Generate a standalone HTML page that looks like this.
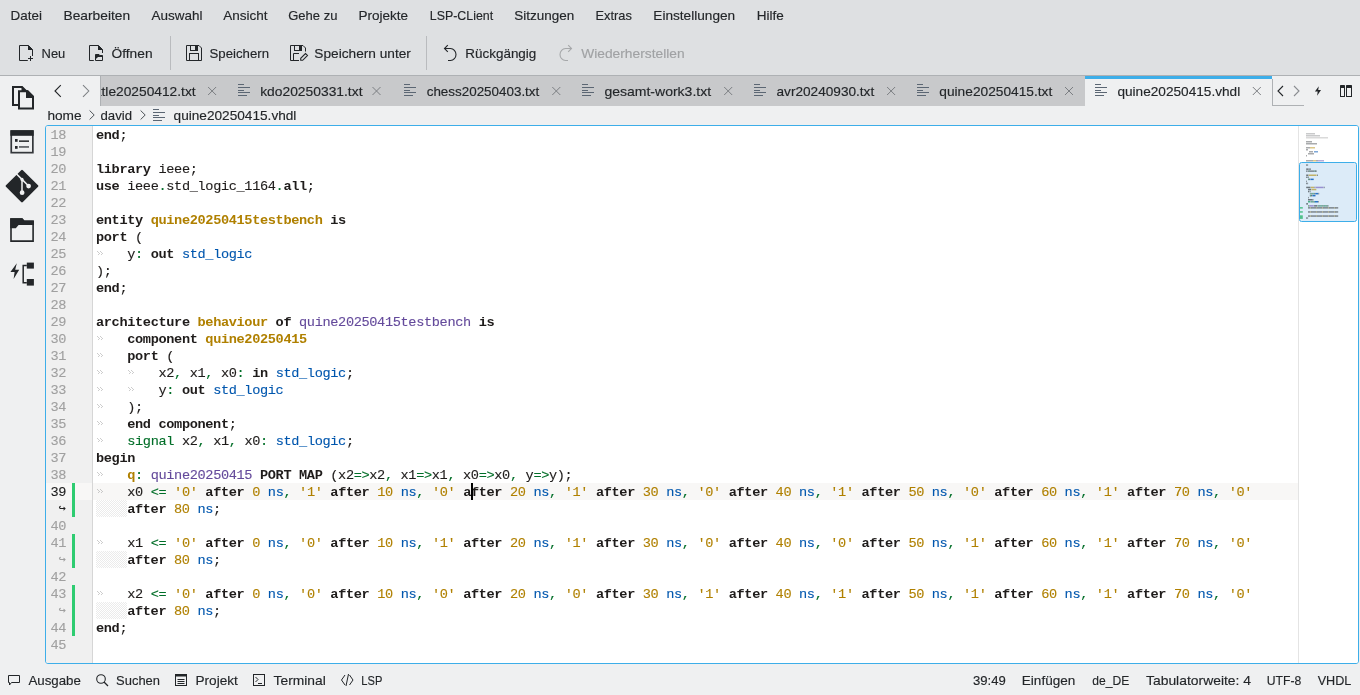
<!DOCTYPE html>
<html><head><meta charset="utf-8"><style>
*{margin:0;padding:0;box-sizing:border-box}
html,body{width:1360px;height:695px;overflow:hidden;background:#eff0f1}
body{position:relative;font-family:"Liberation Sans",sans-serif}
svg.ui{position:absolute;left:0;top:0;z-index:5;will-change:transform}
svg.ui text{font-family:"Liberation Sans",sans-serif;stroke:currentColor;stroke-width:0.15px}
#ed{position:absolute;left:45px;top:125px;width:1314px;height:539px;border:1px solid #3daee9;border-radius:3px;background:#fff;overflow:hidden}
#gut{position:absolute;left:0;top:0;width:46px;height:537px;background:#f0f0f0;will-change:transform}
#sep{position:absolute;left:46px;top:0;width:1px;height:537px;background:#d6d6d6}
#code{position:absolute;left:47px;top:0;width:1205px;height:537px;will-change:transform}
.row{position:absolute;left:0;width:1205px;height:17px;padding-left:3px;white-space:pre;font-family:"Liberation Mono",monospace;font-size:13.6px;letter-spacing:-0.35px;line-height:19px;color:#1f1c1b}
.row.cur{background:#f8f7f6}
.row{-webkit-text-stroke:0.12px currentColor}.row b{font-weight:bold;-webkit-text-stroke:0}
.row i{font-style:normal}
.t{color:#0057ae}.n{color:#b08000}.f{color:#644a9b}.o{color:#006e28}
.tm{color:#c4c4c4}
.hatch{display:inline-block;width:31.2px;height:17px;vertical-align:top;background:repeating-conic-gradient(#ebebeb 0 25%,#fff 0 50%) 0 0/2px 2px}
.gn{position:absolute;left:0;width:20px;height:17px;text-align:right;font-family:"Liberation Mono",monospace;font-size:13.6px;letter-spacing:-0.35px;line-height:19px;color:#a0a0a0;-webkit-text-stroke:0.12px currentColor}
.gn.wrap{font-size:12px;letter-spacing:0}.gn.curn{color:#1e1e1e}
.gcur{position:absolute;left:0;width:46px;height:17px;background:#f8f7f6}
.gbar{position:absolute;left:26px;width:3px;background:#2ecc71}
#mm{position:absolute;left:1252px;top:0;width:60px;height:537px;border-left:1px solid #e4e4e4;background:#fff}
</style></head>
<body>
<div id="ed">
<div id="gut"><div class="gcur" style="top:357px"></div><div class="gbar" style="top:357px;height:34px"></div><div class="gbar" style="top:408px;height:34px"></div><div class="gbar" style="top:459px;height:51px"></div><div class="gn" style="top:0px">18</div><div class="gn" style="top:17px">19</div><div class="gn" style="top:34px">20</div><div class="gn" style="top:51px">21</div><div class="gn" style="top:68px">22</div><div class="gn" style="top:85px">23</div><div class="gn" style="top:102px">24</div><div class="gn" style="top:119px">25</div><div class="gn" style="top:136px">26</div><div class="gn" style="top:153px">27</div><div class="gn" style="top:170px">28</div><div class="gn" style="top:187px">29</div><div class="gn" style="top:204px">30</div><div class="gn" style="top:221px">31</div><div class="gn" style="top:238px">32</div><div class="gn" style="top:255px">33</div><div class="gn" style="top:272px">34</div><div class="gn" style="top:289px">35</div><div class="gn" style="top:306px">36</div><div class="gn" style="top:323px">37</div><div class="gn" style="top:340px">38</div><div class="gn curn" style="top:357px">39</div><div class="gn wrap curn" style="top:374px">↪</div><div class="gn" style="top:391px">40</div><div class="gn" style="top:408px">41</div><div class="gn wrap" style="top:425px">↪</div><div class="gn" style="top:442px">42</div><div class="gn" style="top:459px">43</div><div class="gn wrap" style="top:476px">↪</div><div class="gn" style="top:493px">44</div><div class="gn" style="top:510px">45</div></div>
<div id="sep"></div>
<div id="code"><div class="row" style="top:0px"><b>end</b>;</div><div class="row" style="top:17px"></div><div class="row" style="top:34px"><b>library</b> ieee;</div><div class="row" style="top:51px"><b>use</b> ieee<i class="o">.</i>std_logic_1164<i class="o">.</i><b>all</b>;</div><div class="row" style="top:68px"></div><div class="row" style="top:85px"><b>entity</b> <b class="n">quine20250415testbench</b> <b>is</b></div><div class="row" style="top:102px"><b>port</b> (</div><div class="row" style="top:119px"><i class="tm"><svg width="7.81" height="17" style="vertical-align:top"><path d="M1.5,6.5 L3.5,8.5 L1.5,10.5 M4.5,6.5 L6.5,8.5 L4.5,10.5" fill="none" stroke="#999" stroke-width="1" stroke-dasharray="1.414 1.414"/></svg></i>   y<i class="o">:</i> <b>out</b> <i class="t">std_logic</i></div><div class="row" style="top:136px">);</div><div class="row" style="top:153px"><b>end</b>;</div><div class="row" style="top:170px"></div><div class="row" style="top:187px"><b>architecture</b> <b class="n">behaviour</b> <b>of</b> <i class="f">quine20250415testbench</i> <b>is</b></div><div class="row" style="top:204px"><i class="tm"><svg width="7.81" height="17" style="vertical-align:top"><path d="M1.5,6.5 L3.5,8.5 L1.5,10.5 M4.5,6.5 L6.5,8.5 L4.5,10.5" fill="none" stroke="#999" stroke-width="1" stroke-dasharray="1.414 1.414"/></svg></i>   <b>component</b> <b class="n">quine20250415</b></div><div class="row" style="top:221px"><i class="tm"><svg width="7.81" height="17" style="vertical-align:top"><path d="M1.5,6.5 L3.5,8.5 L1.5,10.5 M4.5,6.5 L6.5,8.5 L4.5,10.5" fill="none" stroke="#999" stroke-width="1" stroke-dasharray="1.414 1.414"/></svg></i>   <b>port</b> (</div><div class="row" style="top:238px"><i class="tm"><svg width="7.81" height="17" style="vertical-align:top"><path d="M1.5,6.5 L3.5,8.5 L1.5,10.5 M4.5,6.5 L6.5,8.5 L4.5,10.5" fill="none" stroke="#999" stroke-width="1" stroke-dasharray="1.414 1.414"/></svg></i>   <i class="tm"><svg width="7.81" height="17" style="vertical-align:top"><path d="M1.5,6.5 L3.5,8.5 L1.5,10.5 M4.5,6.5 L6.5,8.5 L4.5,10.5" fill="none" stroke="#999" stroke-width="1" stroke-dasharray="1.414 1.414"/></svg></i>   x2<i class="o">,</i> x1<i class="o">,</i> x0<i class="o">:</i> <b>in</b> <i class="t">std_logic</i>;</div><div class="row" style="top:255px"><i class="tm"><svg width="7.81" height="17" style="vertical-align:top"><path d="M1.5,6.5 L3.5,8.5 L1.5,10.5 M4.5,6.5 L6.5,8.5 L4.5,10.5" fill="none" stroke="#999" stroke-width="1" stroke-dasharray="1.414 1.414"/></svg></i>   <i class="tm"><svg width="7.81" height="17" style="vertical-align:top"><path d="M1.5,6.5 L3.5,8.5 L1.5,10.5 M4.5,6.5 L6.5,8.5 L4.5,10.5" fill="none" stroke="#999" stroke-width="1" stroke-dasharray="1.414 1.414"/></svg></i>   y<i class="o">:</i> <b>out</b> <i class="t">std_logic</i></div><div class="row" style="top:272px"><i class="tm"><svg width="7.81" height="17" style="vertical-align:top"><path d="M1.5,6.5 L3.5,8.5 L1.5,10.5 M4.5,6.5 L6.5,8.5 L4.5,10.5" fill="none" stroke="#999" stroke-width="1" stroke-dasharray="1.414 1.414"/></svg></i>   );</div><div class="row" style="top:289px"><i class="tm"><svg width="7.81" height="17" style="vertical-align:top"><path d="M1.5,6.5 L3.5,8.5 L1.5,10.5 M4.5,6.5 L6.5,8.5 L4.5,10.5" fill="none" stroke="#999" stroke-width="1" stroke-dasharray="1.414 1.414"/></svg></i>   <b>end component</b>;</div><div class="row" style="top:306px"><i class="tm"><svg width="7.81" height="17" style="vertical-align:top"><path d="M1.5,6.5 L3.5,8.5 L1.5,10.5 M4.5,6.5 L6.5,8.5 L4.5,10.5" fill="none" stroke="#999" stroke-width="1" stroke-dasharray="1.414 1.414"/></svg></i>   <i class="o">signal</i> x2<i class="o">,</i> x1<i class="o">,</i> x0<i class="o">:</i> <i class="t">std_logic</i>;</div><div class="row" style="top:323px"><b>begin</b></div><div class="row" style="top:340px"><i class="tm"><svg width="7.81" height="17" style="vertical-align:top"><path d="M1.5,6.5 L3.5,8.5 L1.5,10.5 M4.5,6.5 L6.5,8.5 L4.5,10.5" fill="none" stroke="#999" stroke-width="1" stroke-dasharray="1.414 1.414"/></svg></i>   <b class="n">q</b><i class="o">:</i> <i class="f">quine20250415</i> <b>PORT MAP</b> (x2<i class="o">=&gt;</i>x2<i class="o">,</i> x1<i class="o">=&gt;</i>x1<i class="o">,</i> x0<i class="o">=&gt;</i>x0<i class="o">,</i> y<i class="o">=&gt;</i>y);</div><div class="row cur" style="top:357px"><i class="tm"><svg width="7.81" height="17" style="vertical-align:top"><path d="M1.5,6.5 L3.5,8.5 L1.5,10.5 M4.5,6.5 L6.5,8.5 L4.5,10.5" fill="none" stroke="#999" stroke-width="1" stroke-dasharray="1.414 1.414"/></svg></i>   x0 <i class="o">&lt;=</i> <i class="n">&#x27;0&#x27;</i> <b>after</b> <i class="n">0</i> <i class="t">ns</i><i class="o">,</i> <i class="n">&#x27;1&#x27;</i> <b>after</b> <i class="n">10</i> <i class="t">ns</i><i class="o">,</i> <i class="n">&#x27;0&#x27;</i> <b>after</b> <i class="n">20</i> <i class="t">ns</i><i class="o">,</i> <i class="n">&#x27;1&#x27;</i> <b>after</b> <i class="n">30</i> <i class="t">ns</i><i class="o">,</i> <i class="n">&#x27;0&#x27;</i> <b>after</b> <i class="n">40</i> <i class="t">ns</i><i class="o">,</i> <i class="n">&#x27;1&#x27;</i> <b>after</b> <i class="n">50</i> <i class="t">ns</i><i class="o">,</i> <i class="n">&#x27;0&#x27;</i> <b>after</b> <i class="n">60</i> <i class="t">ns</i><i class="o">,</i> <i class="n">&#x27;1&#x27;</i> <b>after</b> <i class="n">70</i> <i class="t">ns</i><i class="o">,</i> <i class="n">&#x27;0&#x27;</i></div><div class="row" style="top:374px"><i class="hatch"></i><b>after</b> <i class="n">80</i> <i class="t">ns</i>;</div><div class="row" style="top:391px"></div><div class="row" style="top:408px"><i class="tm"><svg width="7.81" height="17" style="vertical-align:top"><path d="M1.5,6.5 L3.5,8.5 L1.5,10.5 M4.5,6.5 L6.5,8.5 L4.5,10.5" fill="none" stroke="#999" stroke-width="1" stroke-dasharray="1.414 1.414"/></svg></i>   x1 <i class="o">&lt;=</i> <i class="n">&#x27;0&#x27;</i> <b>after</b> <i class="n">0</i> <i class="t">ns</i><i class="o">,</i> <i class="n">&#x27;0&#x27;</i> <b>after</b> <i class="n">10</i> <i class="t">ns</i><i class="o">,</i> <i class="n">&#x27;1&#x27;</i> <b>after</b> <i class="n">20</i> <i class="t">ns</i><i class="o">,</i> <i class="n">&#x27;1&#x27;</i> <b>after</b> <i class="n">30</i> <i class="t">ns</i><i class="o">,</i> <i class="n">&#x27;0&#x27;</i> <b>after</b> <i class="n">40</i> <i class="t">ns</i><i class="o">,</i> <i class="n">&#x27;0&#x27;</i> <b>after</b> <i class="n">50</i> <i class="t">ns</i><i class="o">,</i> <i class="n">&#x27;1&#x27;</i> <b>after</b> <i class="n">60</i> <i class="t">ns</i><i class="o">,</i> <i class="n">&#x27;1&#x27;</i> <b>after</b> <i class="n">70</i> <i class="t">ns</i><i class="o">,</i> <i class="n">&#x27;0&#x27;</i></div><div class="row" style="top:425px"><i class="hatch"></i><b>after</b> <i class="n">80</i> <i class="t">ns</i>;</div><div class="row" style="top:442px"></div><div class="row" style="top:459px"><i class="tm"><svg width="7.81" height="17" style="vertical-align:top"><path d="M1.5,6.5 L3.5,8.5 L1.5,10.5 M4.5,6.5 L6.5,8.5 L4.5,10.5" fill="none" stroke="#999" stroke-width="1" stroke-dasharray="1.414 1.414"/></svg></i>   x2 <i class="o">&lt;=</i> <i class="n">&#x27;0&#x27;</i> <b>after</b> <i class="n">0</i> <i class="t">ns</i><i class="o">,</i> <i class="n">&#x27;0&#x27;</i> <b>after</b> <i class="n">10</i> <i class="t">ns</i><i class="o">,</i> <i class="n">&#x27;0&#x27;</i> <b>after</b> <i class="n">20</i> <i class="t">ns</i><i class="o">,</i> <i class="n">&#x27;0&#x27;</i> <b>after</b> <i class="n">30</i> <i class="t">ns</i><i class="o">,</i> <i class="n">&#x27;1&#x27;</i> <b>after</b> <i class="n">40</i> <i class="t">ns</i><i class="o">,</i> <i class="n">&#x27;1&#x27;</i> <b>after</b> <i class="n">50</i> <i class="t">ns</i><i class="o">,</i> <i class="n">&#x27;1&#x27;</i> <b>after</b> <i class="n">60</i> <i class="t">ns</i><i class="o">,</i> <i class="n">&#x27;1&#x27;</i> <b>after</b> <i class="n">70</i> <i class="t">ns</i><i class="o">,</i> <i class="n">&#x27;0&#x27;</i></div><div class="row" style="top:476px"><i class="hatch"></i><b>after</b> <i class="n">80</i> <i class="t">ns</i>;</div><div class="row" style="top:493px"><b>end</b>;</div><div class="row" style="top:510px"></div></div>
<div id="mm"><svg width="59" height="536" style="position:absolute;left:0;top:0"><rect x="0.5" y="36.5" width="57" height="59" rx="2" fill="#dcebf8" stroke="#3daee9" stroke-width="1"/><rect x="7.0" y="7.0" width="9.0" height="1.5" fill="#c9cacb" opacity="1"/><rect x="7.0" y="9.0" width="14.0" height="1.5" fill="#c9cacb" opacity="1"/><rect x="7.0" y="11.0" width="22.0" height="1.5" fill="#dadada" opacity="1"/><rect x="7.0" y="15.0" width="6.0" height="1.5" fill="#a9abad" opacity="1"/><rect x="7.0" y="17.0" width="11.0" height="1.5" fill="#a9abad" opacity="1"/><rect x="7.0" y="21.0" width="4.0" height="1.5" fill="#a9abad" opacity="1"/><rect x="11.0" y="21.0" width="5.0" height="1.5" fill="#dcc78a" opacity="1"/><rect x="7.0" y="23.0" width="2.0" height="1.5" fill="#a9abad" opacity="1"/><rect x="10.0" y="25.0" width="4.0" height="1.5" fill="#a9abad" opacity="1"/><rect x="15.0" y="25.0" width="4.0" height="1.5" fill="#7fa8d8" opacity="1"/><rect x="9.0" y="27.0" width="6.0" height="1.5" fill="#a9abad" opacity="1"/><rect x="7.0" y="29.0" width="1.0" height="1.5" fill="#a9abad" opacity="1"/><rect x="7.0" y="34.0" width="7.0" height="1.5" fill="#a9abad" opacity="1"/><rect x="14.0" y="34.0" width="3.0" height="1.5" fill="#dcc78a" opacity="1"/><rect x="17.0" y="34.0" width="2.0" height="1.5" fill="#a9abad" opacity="1"/><rect x="19.0" y="34.0" width="6.0" height="1.5" fill="#b5abd8" opacity="1"/><rect x="7.2" y="38.3" width="1.1" height="1.5" fill="#6b747c" opacity="1"/><rect x="8.3" y="38.3" width="0.8" height="1.5" fill="#7c858c" opacity="1"/><rect x="7.2" y="42.4" width="2.5" height="1.5" fill="#6b747c" opacity="1"/><rect x="10.1" y="42.4" width="1.8" height="1.5" fill="#7c858c" opacity="1"/><rect x="7.2" y="44.4" width="1.1" height="1.5" fill="#6b747c" opacity="1"/><rect x="8.6" y="44.4" width="1.4" height="1.5" fill="#7c858c" opacity="1"/><rect x="10.1" y="44.4" width="0.8" height="1.5" fill="#4aae88" opacity="1"/><rect x="10.4" y="44.4" width="5.0" height="1.5" fill="#7c858c" opacity="1"/><rect x="15.5" y="44.4" width="0.8" height="1.5" fill="#4aae88" opacity="1"/><rect x="15.8" y="44.4" width="1.1" height="1.5" fill="#6b747c" opacity="1"/><rect x="16.9" y="44.4" width="0.8" height="1.5" fill="#7c858c" opacity="1"/><rect x="7.2" y="48.5" width="2.2" height="1.5" fill="#6b747c" opacity="1"/><rect x="9.7" y="48.5" width="7.9" height="1.5" fill="#c2b268" opacity="1"/><rect x="18.0" y="48.5" width="0.8" height="1.5" fill="#6b747c" opacity="1"/><rect x="7.2" y="50.5" width="1.4" height="1.5" fill="#6b747c" opacity="1"/><rect x="9.0" y="50.5" width="0.8" height="1.5" fill="#7c858c" opacity="1"/><rect x="9.0" y="52.6" width="0.8" height="1.5" fill="#7c858c" opacity="1"/><rect x="9.4" y="52.6" width="0.8" height="1.5" fill="#4aae88" opacity="1"/><rect x="10.1" y="52.6" width="1.1" height="1.5" fill="#6b747c" opacity="1"/><rect x="11.5" y="52.6" width="3.2" height="1.5" fill="#2a72c4" opacity="1"/><rect x="7.2" y="54.6" width="0.8" height="1.5" fill="#7c858c" opacity="1"/><rect x="7.2" y="56.7" width="1.1" height="1.5" fill="#6b747c" opacity="1"/><rect x="8.3" y="56.7" width="0.8" height="1.5" fill="#7c858c" opacity="1"/><rect x="7.2" y="60.7" width="4.3" height="1.5" fill="#6b747c" opacity="1"/><rect x="11.9" y="60.7" width="3.2" height="1.5" fill="#c2b268" opacity="1"/><rect x="15.5" y="60.7" width="0.8" height="1.5" fill="#6b747c" opacity="1"/><rect x="16.6" y="60.7" width="7.9" height="1.5" fill="#9890d0" opacity="1"/><rect x="24.8" y="60.7" width="0.8" height="1.5" fill="#6b747c" opacity="1"/><rect x="9.0" y="62.8" width="3.2" height="1.5" fill="#6b747c" opacity="1"/><rect x="12.6" y="62.8" width="4.7" height="1.5" fill="#c2b268" opacity="1"/><rect x="9.0" y="64.8" width="1.4" height="1.5" fill="#6b747c" opacity="1"/><rect x="10.8" y="64.8" width="0.8" height="1.5" fill="#7c858c" opacity="1"/><rect x="10.8" y="66.9" width="0.8" height="1.5" fill="#7c858c" opacity="1"/><rect x="11.5" y="66.9" width="0.8" height="1.5" fill="#4aae88" opacity="1"/><rect x="12.2" y="66.9" width="0.8" height="1.5" fill="#7c858c" opacity="1"/><rect x="13.0" y="66.9" width="0.8" height="1.5" fill="#4aae88" opacity="1"/><rect x="13.7" y="66.9" width="0.8" height="1.5" fill="#7c858c" opacity="1"/><rect x="14.4" y="66.9" width="0.8" height="1.5" fill="#4aae88" opacity="1"/><rect x="15.1" y="66.9" width="0.8" height="1.5" fill="#6b747c" opacity="1"/><rect x="16.2" y="66.9" width="3.2" height="1.5" fill="#2a72c4" opacity="1"/><rect x="19.4" y="66.9" width="0.8" height="1.5" fill="#7c858c" opacity="1"/><rect x="10.8" y="68.9" width="0.8" height="1.5" fill="#7c858c" opacity="1"/><rect x="11.2" y="68.9" width="0.8" height="1.5" fill="#4aae88" opacity="1"/><rect x="11.9" y="68.9" width="1.1" height="1.5" fill="#6b747c" opacity="1"/><rect x="13.3" y="68.9" width="3.2" height="1.5" fill="#2a72c4" opacity="1"/><rect x="9.0" y="70.9" width="0.8" height="1.5" fill="#7c858c" opacity="1"/><rect x="9.0" y="73.0" width="4.7" height="1.5" fill="#6b747c" opacity="1"/><rect x="13.7" y="73.0" width="0.8" height="1.5" fill="#7c858c" opacity="1"/><rect x="9.0" y="75.0" width="2.2" height="1.5" fill="#4aae88" opacity="1"/><rect x="11.5" y="75.0" width="0.8" height="1.5" fill="#7c858c" opacity="1"/><rect x="12.2" y="75.0" width="0.8" height="1.5" fill="#4aae88" opacity="1"/><rect x="13.0" y="75.0" width="0.8" height="1.5" fill="#7c858c" opacity="1"/><rect x="13.7" y="75.0" width="0.8" height="1.5" fill="#4aae88" opacity="1"/><rect x="14.4" y="75.0" width="0.8" height="1.5" fill="#7c858c" opacity="1"/><rect x="15.1" y="75.0" width="0.8" height="1.5" fill="#4aae88" opacity="1"/><rect x="15.8" y="75.0" width="3.2" height="1.5" fill="#2a72c4" opacity="1"/><rect x="19.1" y="75.0" width="0.8" height="1.5" fill="#7c858c" opacity="1"/><rect x="7.2" y="77.1" width="1.8" height="1.5" fill="#6b747c" opacity="1"/><rect x="9.0" y="79.1" width="0.8" height="1.5" fill="#c2b268" opacity="1"/><rect x="9.4" y="79.1" width="0.8" height="1.5" fill="#4aae88" opacity="1"/><rect x="10.1" y="79.1" width="4.7" height="1.5" fill="#9890d0" opacity="1"/><rect x="15.1" y="79.1" width="2.9" height="1.5" fill="#6b747c" opacity="1"/><rect x="18.4" y="79.1" width="1.1" height="1.5" fill="#7c858c" opacity="1"/><rect x="19.4" y="79.1" width="0.8" height="1.5" fill="#4aae88" opacity="1"/><rect x="20.2" y="79.1" width="0.8" height="1.5" fill="#7c858c" opacity="1"/><rect x="20.9" y="79.1" width="0.8" height="1.5" fill="#4aae88" opacity="1"/><rect x="21.6" y="79.1" width="0.8" height="1.5" fill="#7c858c" opacity="1"/><rect x="22.3" y="79.1" width="0.8" height="1.5" fill="#4aae88" opacity="1"/><rect x="23.0" y="79.1" width="0.8" height="1.5" fill="#7c858c" opacity="1"/><rect x="23.8" y="79.1" width="0.8" height="1.5" fill="#4aae88" opacity="1"/><rect x="24.5" y="79.1" width="0.8" height="1.5" fill="#7c858c" opacity="1"/><rect x="25.2" y="79.1" width="0.8" height="1.5" fill="#4aae88" opacity="1"/><rect x="25.9" y="79.1" width="0.8" height="1.5" fill="#7c858c" opacity="1"/><rect x="26.6" y="79.1" width="0.8" height="1.5" fill="#4aae88" opacity="1"/><rect x="27.4" y="79.1" width="0.8" height="1.5" fill="#7c858c" opacity="1"/><rect x="27.7" y="79.1" width="0.8" height="1.5" fill="#4aae88" opacity="1"/><rect x="28.4" y="79.1" width="1.1" height="1.5" fill="#7c858c" opacity="1"/><rect x="9.0" y="81.1" width="2.5" height="1.5" fill="#7c858c" opacity="1"/><rect x="11.5" y="81.1" width="0.8" height="1.5" fill="#c2b268" opacity="1"/><rect x="11.9" y="81.1" width="5.4" height="1.5" fill="#7c858c" opacity="1"/><rect x="17.3" y="81.1" width="0.8" height="1.5" fill="#c2b268" opacity="1"/><rect x="17.6" y="81.1" width="5.8" height="1.5" fill="#7c858c" opacity="1"/><rect x="23.4" y="81.1" width="0.8" height="1.5" fill="#c2b268" opacity="1"/><rect x="23.8" y="81.1" width="5.8" height="1.5" fill="#7c858c" opacity="1"/><rect x="29.5" y="81.1" width="0.8" height="1.5" fill="#c2b268" opacity="1"/><rect x="29.9" y="81.1" width="5.8" height="1.5" fill="#7c858c" opacity="1"/><rect x="35.6" y="81.1" width="0.8" height="1.5" fill="#c2b268" opacity="1"/><rect x="36.0" y="81.1" width="3.2" height="1.5" fill="#7c858c" opacity="1"/><rect x="9.0" y="85.2" width="2.5" height="1.5" fill="#7c858c" opacity="1"/><rect x="11.5" y="85.2" width="0.8" height="1.5" fill="#c2b268" opacity="1"/><rect x="11.9" y="85.2" width="5.4" height="1.5" fill="#7c858c" opacity="1"/><rect x="17.3" y="85.2" width="0.8" height="1.5" fill="#c2b268" opacity="1"/><rect x="17.6" y="85.2" width="5.8" height="1.5" fill="#7c858c" opacity="1"/><rect x="23.4" y="85.2" width="0.8" height="1.5" fill="#c2b268" opacity="1"/><rect x="23.8" y="85.2" width="5.8" height="1.5" fill="#7c858c" opacity="1"/><rect x="29.5" y="85.2" width="0.8" height="1.5" fill="#c2b268" opacity="1"/><rect x="29.9" y="85.2" width="5.8" height="1.5" fill="#7c858c" opacity="1"/><rect x="35.6" y="85.2" width="0.8" height="1.5" fill="#c2b268" opacity="1"/><rect x="36.0" y="85.2" width="3.2" height="1.5" fill="#7c858c" opacity="1"/><rect x="9.0" y="89.3" width="2.5" height="1.5" fill="#7c858c" opacity="1"/><rect x="11.5" y="89.3" width="0.8" height="1.5" fill="#c2b268" opacity="1"/><rect x="11.9" y="89.3" width="5.4" height="1.5" fill="#7c858c" opacity="1"/><rect x="17.3" y="89.3" width="0.8" height="1.5" fill="#c2b268" opacity="1"/><rect x="17.6" y="89.3" width="5.8" height="1.5" fill="#7c858c" opacity="1"/><rect x="23.4" y="89.3" width="0.8" height="1.5" fill="#c2b268" opacity="1"/><rect x="23.8" y="89.3" width="5.8" height="1.5" fill="#7c858c" opacity="1"/><rect x="29.5" y="89.3" width="0.8" height="1.5" fill="#c2b268" opacity="1"/><rect x="29.9" y="89.3" width="5.8" height="1.5" fill="#7c858c" opacity="1"/><rect x="35.6" y="89.3" width="0.8" height="1.5" fill="#c2b268" opacity="1"/><rect x="36.0" y="89.3" width="3.2" height="1.5" fill="#7c858c" opacity="1"/><rect x="7.2" y="91.3" width="1.1" height="1.5" fill="#6b747c" opacity="1"/><rect x="8.3" y="91.3" width="0.8" height="1.5" fill="#7c858c" opacity="1"/><rect x="1.0" y="81.1" width="2.8" height="1.5" fill="#4fc08a" opacity="1"/><rect x="1.0" y="85.2" width="2.8" height="1.5" fill="#4fc08a" opacity="1"/><rect x="1.0" y="89.3" width="2.8" height="3.6" fill="#4fc08a" opacity="1"/></svg></div>
<div style="position:absolute;left:425px;top:357px;width:2px;height:17px;background:#000;z-index:3"></div>
</div>
<svg class="ui" width="1360" height="695" viewBox="0 0 1360 695">
<rect x="0" y="0" width="1360" height="75" fill="#dee0e2"/>
<rect x="0" y="75" width="1360" height="1" fill="#aeb1b4"/>
<rect x="101" y="76" width="984" height="30" fill="#c8c9cb"/>
<rect x="100" y="76" width="1" height="30" fill="#aeb1b4"/>
<rect x="1085" y="76" width="187" height="3" fill="#3daee9"/>
<rect x="1272" y="79" width="1" height="27" fill="#aeb1b4"/>
<rect x="1272" y="105" width="32" height="1" fill="#aeb1b4"/>
<text x="10.60" y="20" font-size="13.5" fill="#232629" color="#232629" textLength="31.30" lengthAdjust="spacingAndGlyphs">Datei</text>
<text x="63.50" y="20" font-size="13.5" fill="#232629" color="#232629" textLength="66.60" lengthAdjust="spacingAndGlyphs">Bearbeiten</text>
<text x="151.50" y="20" font-size="13.5" fill="#232629" color="#232629" textLength="50.90" lengthAdjust="spacingAndGlyphs">Auswahl</text>
<text x="223.20" y="20" font-size="13.5" fill="#232629" color="#232629" textLength="44.30" lengthAdjust="spacingAndGlyphs">Ansicht</text>
<text x="288.20" y="20" font-size="13.5" fill="#232629" color="#232629" textLength="49.20" lengthAdjust="spacingAndGlyphs">Gehe zu</text>
<text x="358.40" y="20" font-size="13.5" fill="#232629" color="#232629" textLength="49.60" lengthAdjust="spacingAndGlyphs">Projekte</text>
<text x="429.80" y="20" font-size="13.5" fill="#232629" color="#232629" textLength="63.40" lengthAdjust="spacingAndGlyphs">LSP-CLient</text>
<text x="514.20" y="20" font-size="13.5" fill="#232629" color="#232629" textLength="60.00" lengthAdjust="spacingAndGlyphs">Sitzungen</text>
<text x="595.50" y="20" font-size="13.5" fill="#232629" color="#232629" textLength="36.30" lengthAdjust="spacingAndGlyphs">Extras</text>
<text x="653.30" y="20" font-size="13.5" fill="#232629" color="#232629" textLength="81.90" lengthAdjust="spacingAndGlyphs">Einstellungen</text>
<text x="756.70" y="20" font-size="13.5" fill="#232629" color="#232629" textLength="27.10" lengthAdjust="spacingAndGlyphs">Hilfe</text>
<text x="41.60" y="58" font-size="13.5" fill="#232629" color="#232629" textLength="23.70" lengthAdjust="spacingAndGlyphs">Neu</text>
<text x="111.50" y="58" font-size="13.5" fill="#232629" color="#232629" textLength="41.10" lengthAdjust="spacingAndGlyphs">Öffnen</text>
<text x="209.50" y="58" font-size="13.5" fill="#232629" color="#232629" textLength="59.50" lengthAdjust="spacingAndGlyphs">Speichern</text>
<text x="314.30" y="58" font-size="13.5" fill="#232629" color="#232629" textLength="96.60" lengthAdjust="spacingAndGlyphs">Speichern unter</text>
<text x="465.30" y="58" font-size="13.5" fill="#232629" color="#232629" textLength="71.00" lengthAdjust="spacingAndGlyphs">Rückgängig</text>
<text x="581.20" y="58" font-size="13.5" fill="#a0a2a4" color="#a0a2a4" textLength="103.40" lengthAdjust="spacingAndGlyphs">Wiederherstellen</text>
<rect x="170" y="36" width="1" height="34" fill="#b9bbbe"/>
<rect x="426" y="36" width="1" height="34" fill="#b9bbbe"/>
<path d="M27.8,60.5 H19.5 V45.5 H28.5 L32.5,49.5 V56" fill="none" stroke="#232629" stroke-width="1"/>
<path d="M28,45 L33,50 H28 Z" fill="#232629"/>
<path d="M28,58.5 H33 M30.5,56 V61" stroke="#232629" stroke-width="1"/>
<path d="M93.8,60.5 H89.5 V45.5 H98.5 L102.5,49.5 V53" fill="none" stroke="#232629" stroke-width="1"/>
<path d="M98,45 L103,50 H98 Z" fill="#232629"/>
<path d="M95.5,60.5 V54.5 H99 L100,55.5 H102.5 V60.5 Z" fill="none" stroke="#232629" stroke-width="1"/>
<path d="M95.5,54.5 H99 L100,55.5 H102.5 V57 H98 L96.5,58.5 H95.5 Z" fill="#232629"/>
<path d="M186.5,45.5 H199 L201.5,48 V60.5 H186.5 Z" fill="none" stroke="#232629" stroke-width="1"/><rect x="189.5" y="53.5" width="9" height="7" fill="none" stroke="#232629" stroke-width="1"/><rect x="190.5" y="45.5" width="7" height="5" fill="none" stroke="#232629" stroke-width="1"/><rect x="195" y="46" width="2.5" height="4.5" fill="#232629"/>
<path d="M299,60.5 H290.5 V45.5 H303 L305.5,48 V51.5" fill="none" stroke="#232629" stroke-width="1"/><path d="M299,53.5 H293.5 V60.5" fill="none" stroke="#232629" stroke-width="1"/><path d="M300.7,60.3 V58.3 L305.5,53.5 L307.5,55.5 L302.7,60.3 Z" fill="none" stroke="#232629" stroke-width="1.1"/><rect x="294.5" y="45.5" width="7" height="5" fill="none" stroke="#232629" stroke-width="1"/><rect x="299" y="46" width="2.5" height="4.5" fill="#232629"/>
<path d="M444.5,48.5 H450.5 A5.5,6 0 0 1 450.5,60.5 H448" fill="none" stroke="#232629" stroke-width="1.1"/>
<path d="M447.8,45.2 L444.5,48.5 L447.8,51.8" fill="none" stroke="#232629" stroke-width="1.1"/>
<path d="M571.5,48.5 H565.5 A5.5,6 0 0 0 565.5,60.5 H568" fill="none" stroke="#a6a8aa" stroke-width="1.1"/>
<path d="M568.2,45.2 L571.5,48.5 L568.2,51.8" fill="none" stroke="#a6a8aa" stroke-width="1.1"/>
<path d="M19,105 H13 V87 H22 L26,91" fill="none" stroke="#232629" stroke-width="2"/>
<path d="M21.5,86 L26.5,91 H21.5 Z" fill="#232629"/>
<path d="M19,108.6 V91.2 H27.5 L33,96.7 V108.6 Z" fill="none" stroke="#232629" stroke-width="2"/>
<path d="M26,90.2 H28 L34,96.2 V98 H26 Z" fill="#232629"/>
<rect x="11.25" y="131.2" width="21.6" height="21.45" fill="none" stroke="#34373b" stroke-width="1.7"/>
<rect x="10.4" y="130.2" width="23.3" height="5.6" fill="#232629"/>
<rect x="15" y="139" width="2.6" height="2.8" fill="#232629"/><rect x="15" y="146" width="2.6" height="2.8" fill="#232629"/>
<rect x="19" y="140.4" width="10" height="1.5" fill="#232629"/><rect x="19" y="146.2" width="10" height="1.5" fill="#4a4d51"/>
<path d="M22,171 L37.2,186 L22,201.2 L6.8,186 Z" fill="#232629" stroke="#232629" stroke-width="2.4" stroke-linejoin="round"/>
<path d="M15.8,173.2 L22,179.4 V192.5 M22,179.4 L28.6,186" fill="none" stroke="#eff0f1" stroke-width="1.5"/>
<circle cx="22" cy="179.4" r="1.6" fill="#eff0f1"/><circle cx="22.1" cy="192.7" r="2.4" fill="#eff0f1"/><circle cx="28.6" cy="186.1" r="2.4" fill="#eff0f1"/>
<path d="M11,219 H22 L24,221 H33.1 V241.1 H11 Z" fill="none" stroke="#232629" stroke-width="1.6"/>
<path d="M10.2,218.2 H22.4 L24.4,221 H33.9 V224.9 H18.6 L15.8,228.2 H10.2 Z" fill="#232629"/>
<path d="M16.8,263.2 L10.4,272 H14.6 L13.6,279 L19.2,269.8 H15.2 Z" fill="#232629"/>
<path d="M26.8,265.4 H23.2 V282.8 H26.8" fill="none" stroke="#232629" stroke-width="1.5"/>
<rect x="26.8" y="262.6" width="7.1" height="6" fill="#232629"/><rect x="26.8" y="279" width="7.1" height="6.6" fill="#232629"/>
<defs><clipPath id="tabclip"><rect x="101" y="76" width="1259" height="30"/></clipPath></defs>
<g clip-path="url(#tabclip)">
<text x="82.45" y="96" font-size="13.5" fill="#232629" color="#232629" textLength="113.15" lengthAdjust="spacingAndGlyphs">battle20250412.txt</text>
</g>
<path d="M208.1,87.0 L216.1,95.0 M216.1,87.0 L208.1,95.0" stroke="#7b7e82" stroke-width="1" fill="none"/>
<g fill="#5b6673"><rect x="238" y="84" width="6" height="1"/><rect x="238" y="87" width="12" height="1"/><rect x="238" y="90" width="6" height="1"/><rect x="238" y="92" width="12" height="1"/><rect x="238" y="95" width="9" height="1"/></g>
<text x="260.20" y="96" font-size="13.5" fill="#232629" color="#232629" textLength="102.30" lengthAdjust="spacingAndGlyphs">kdo20250331.txt</text>
<path d="M372.5,87.0 L380.5,95.0 M380.5,87.0 L372.5,95.0" stroke="#7b7e82" stroke-width="1" fill="none"/>
<g fill="#5b6673"><rect x="404" y="84" width="6" height="1"/><rect x="404" y="87" width="12" height="1"/><rect x="404" y="90" width="6" height="1"/><rect x="404" y="92" width="12" height="1"/><rect x="404" y="95" width="9" height="1"/></g>
<text x="426.70" y="96" font-size="13.5" fill="#232629" color="#232629" textLength="112.60" lengthAdjust="spacingAndGlyphs">chess20250403.txt</text>
<path d="M552.3,87.0 L560.3,95.0 M560.3,87.0 L552.3,95.0" stroke="#7b7e82" stroke-width="1" fill="none"/>
<g fill="#5b6673"><rect x="582" y="84" width="6" height="1"/><rect x="582" y="87" width="12" height="1"/><rect x="582" y="90" width="6" height="1"/><rect x="582" y="92" width="12" height="1"/><rect x="582" y="95" width="9" height="1"/></g>
<text x="604.40" y="96" font-size="13.5" fill="#232629" color="#232629" textLength="106.70" lengthAdjust="spacingAndGlyphs">gesamt-work3.txt</text>
<path d="M724.2,87.0 L732.2,95.0 M732.2,87.0 L724.2,95.0" stroke="#7b7e82" stroke-width="1" fill="none"/>
<g fill="#5b6673"><rect x="754" y="84" width="6" height="1"/><rect x="754" y="87" width="12" height="1"/><rect x="754" y="90" width="6" height="1"/><rect x="754" y="92" width="12" height="1"/><rect x="754" y="95" width="9" height="1"/></g>
<text x="776.50" y="96" font-size="13.5" fill="#232629" color="#232629" textLength="97.70" lengthAdjust="spacingAndGlyphs">avr20240930.txt</text>
<path d="M887.1,87.0 L895.1,95.0 M895.1,87.0 L887.1,95.0" stroke="#7b7e82" stroke-width="1" fill="none"/>
<g fill="#5b6673"><rect x="917" y="84" width="6" height="1"/><rect x="917" y="87" width="12" height="1"/><rect x="917" y="90" width="6" height="1"/><rect x="917" y="92" width="12" height="1"/><rect x="917" y="95" width="9" height="1"/></g>
<text x="939.30" y="96" font-size="13.5" fill="#232629" color="#232629" textLength="113.00" lengthAdjust="spacingAndGlyphs">quine20250415.txt</text>
<path d="M1065.0,87.0 L1073.0,95.0 M1073.0,87.0 L1065.0,95.0" stroke="#7b7e82" stroke-width="1" fill="none"/>
<g fill="#5b6673"><rect x="1095" y="84" width="6" height="1"/><rect x="1095" y="87" width="12" height="1"/><rect x="1095" y="90" width="6" height="1"/><rect x="1095" y="92" width="12" height="1"/><rect x="1095" y="95" width="9" height="1"/></g>
<text x="1117.40" y="96" font-size="13.5" fill="#232629" color="#232629" textLength="122.80" lengthAdjust="spacingAndGlyphs">quine20250415.vhdl</text>
<path d="M1252.8,87.0 L1260.8,95.0 M1260.8,87.0 L1252.8,95.0" stroke="#7b7e82" stroke-width="1" fill="none"/>
<path d="M60.8,85.2 L55,91 L60.8,96.8" fill="none" stroke="#232629" stroke-width="1.1"/>
<path d="M83,85.2 L88.8,91 L83,96.8" fill="none" stroke="#7c7f83" stroke-width="1.05"/>
<path d="M1283,86 L1278,91 L1283,96" fill="none" stroke="#232629" stroke-width="1.1"/>
<path d="M1294,86 L1299,91 L1294,96" fill="none" stroke="#8a8d91" stroke-width="1.1"/>
<path d="M1318.8,86.2 L1314.9,91.6 H1317.7 L1317.1,95.7 L1321,90.1 H1318.2 Z" fill="#232629"/>
<rect x="1340" y="85" width="5" height="12" rx="0.6" fill="#232629"/><rect x="1341" y="88" width="3" height="8" fill="#eff0f1"/>
<rect x="1346" y="85" width="6" height="12" rx="0.6" fill="#232629"/><rect x="1347" y="88" width="4" height="8" fill="#eff0f1"/>
<text x="47.40" y="119.6" font-size="13.5" fill="#232629" color="#232629" textLength="34.20" lengthAdjust="spacingAndGlyphs">home</text>
<path d="M89.6,110.5 L94.2,115 L89.6,119.5" fill="none" stroke="#4d5257" stroke-width="1"/>
<text x="100.50" y="119.6" font-size="13.5" fill="#232629" color="#232629" textLength="31.60" lengthAdjust="spacingAndGlyphs">david</text>
<path d="M140.6,110.5 L145.2,115 L140.6,119.5" fill="none" stroke="#4d5257" stroke-width="1"/>
<g fill="#5b6673"><rect x="153" y="109" width="6" height="1"/><rect x="153" y="112" width="12" height="1"/><rect x="153" y="115" width="6" height="1"/><rect x="153" y="117" width="12" height="1"/><rect x="153" y="120" width="9" height="1"/></g>
<text x="173.60" y="119.6" font-size="13.5" fill="#232629" color="#232629" textLength="122.80" lengthAdjust="spacingAndGlyphs">quine20250415.vhdl</text>
<text x="28.40" y="685" font-size="13.5" fill="#232629" color="#232629" textLength="52.50" lengthAdjust="spacingAndGlyphs">Ausgabe</text>
<text x="116.10" y="685" font-size="13.5" fill="#232629" color="#232629" textLength="43.90" lengthAdjust="spacingAndGlyphs">Suchen</text>
<text x="195.50" y="685" font-size="13.5" fill="#232629" color="#232629" textLength="42.30" lengthAdjust="spacingAndGlyphs">Projekt</text>
<text x="273.60" y="685" font-size="13.5" fill="#232629" color="#232629" textLength="52.20" lengthAdjust="spacingAndGlyphs">Terminal</text>
<text x="361.30" y="685" font-size="13.5" fill="#232629" color="#232629" textLength="21.00" lengthAdjust="spacingAndGlyphs">LSP</text>
<text x="973.00" y="685" font-size="13.5" fill="#232629" color="#232629" textLength="32.80" lengthAdjust="spacingAndGlyphs">39:49</text>
<text x="1021.80" y="685" font-size="13.5" fill="#232629" color="#232629" textLength="53.50" lengthAdjust="spacingAndGlyphs">Einfügen</text>
<text x="1092.30" y="685" font-size="13.5" fill="#232629" color="#232629" textLength="37.00" lengthAdjust="spacingAndGlyphs">de_DE</text>
<text x="1146.00" y="685" font-size="13.5" fill="#232629" color="#232629" textLength="105.00" lengthAdjust="spacingAndGlyphs">Tabulatorweite: 4</text>
<text x="1266.70" y="685" font-size="13.5" fill="#232629" color="#232629" textLength="34.60" lengthAdjust="spacingAndGlyphs">UTF-8</text>
<text x="1317.70" y="685" font-size="13.5" fill="#232629" color="#232629" textLength="33.70" lengthAdjust="spacingAndGlyphs">VHDL</text>
<g transform="translate(0,1)">
<path d="M8.5,674.5 H19.5 V681.5 H11.5 L9.5,684 V681.5 H8.5 Z" fill="none" stroke="#232629" stroke-width="1"/>
<circle cx="101" cy="678" r="4.3" fill="none" stroke="#232629" stroke-width="1.1"/><path d="M104,681 L108,685" stroke="#232629" stroke-width="1.2"/>
<rect x="175.5" y="673.5" width="11" height="11" fill="none" stroke="#232629" stroke-width="1"/><rect x="175.5" y="673.5" width="11" height="2" fill="#232629"/><path d="M177.5,678.5 H184.5 M177.5,680.5 H184.5 M177.5,682.5 H184.5" stroke="#232629" stroke-width="1"/>
<rect x="253.5" y="673.5" width="11" height="11" fill="none" stroke="#232629" stroke-width="1"/><path d="M255.5,676 L258,678.5 L255.5,681 M258,682.5 H262" fill="none" stroke="#232629" stroke-width="1"/>
<path d="M345,674 L341.5,679 L345,684 M349.5,674 L353,679 L349.5,684 M348.5,673 L346,685" fill="none" stroke="#232629" stroke-width="1"/>
</g>
</svg>
</body></html>
